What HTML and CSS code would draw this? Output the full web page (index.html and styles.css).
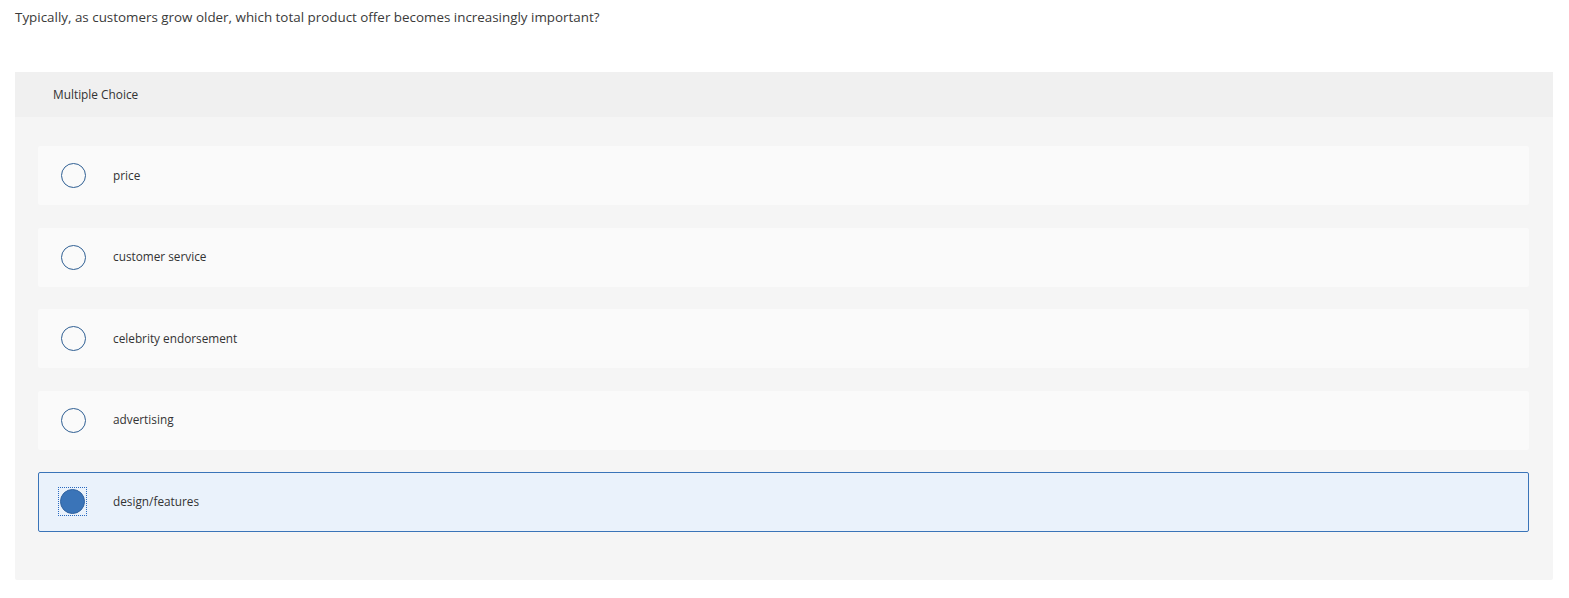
FILE: index.html
```html
<!DOCTYPE html>
<html>
<head>
<meta charset="utf-8">
<link rel="stylesheet" href="styles.css">
</head>
<body>
<div class="page">
  <p class="question">Typically, as customers grow older, which total product offer becomes increasingly important?</p>
  <div class="panel">
    <div class="panel-head">Multiple Choice</div>
    <div class="options">
      <div class="option"><span class="radio"></span><span class="label">price</span></div>
      <div class="option"><span class="radio"></span><span class="label">customer service</span></div>
      <div class="option"><span class="radio"></span><span class="label">celebrity endorsement</span></div>
      <div class="option"><span class="radio"></span><span class="label">advertising</span></div>
      <div class="option selected"><span class="radio-focus"><span class="radio"></span></span><span class="label">design/features</span></div>
    </div>
  </div>
</div>
</body>
</html>
```
FILE: styles.css
```css
html, body {
  margin: 0;
  padding: 0;
  background: #ffffff;
}
body {
  font-family: "Open Sans", Lato, "Liberation Sans", sans-serif;
  color: #333333;
}
.page {
  padding: 9px 16px 0 15px;
}
.question {
  margin: 0;
  font-size: 13.4px;
  line-height: 17px;
  color: #3a3a3a;
}
.panel {
  margin-top: 46px;
  background: #f5f5f5;
  border-radius: 2px;
}
.panel-head {
  background: #f0f0f0;
  height: 45px;
  display: flex;
  align-items: center;
  padding-left: 38px;
  padding-bottom: 2px;
  box-sizing: border-box;
  font-size: 11.85px;
  color: #333;
}
.options {
  display: flex;
  flex-direction: column;
  gap: 22.5px;
  padding: 29px 24px 48.5px 23px;
}
.option {
  height: 59px;
  box-sizing: border-box;
  background: #fafafa;
  border-radius: 2px;
  display: flex;
  align-items: center;
  padding-left: 23px;
  font-size: 11.8px;
  color: #333;
}
.radio {
  width: 25px;
  height: 25px;
  box-sizing: border-box;
  border: 1.5px solid #2f5f93;
  border-radius: 50%;
  flex: none;
  display: block;
}
.label {
  margin-left: 27px;
  padding-bottom: 2px;
}
.option.selected {
  height: 59.5px;
  background: #eaf2fb;
  border: 1px solid #3a74b8;
  padding-left: 20px;
}
.radio-focus {
  display: block;
  padding: 1px;
  outline: 1px dotted #2a6ac0;
  flex: none;
}
.option.selected .radio {
  background: #3a74b8;
  border-color: #2f62a0;
}
.option.selected .label {
  margin-left: 27px;
}
```
